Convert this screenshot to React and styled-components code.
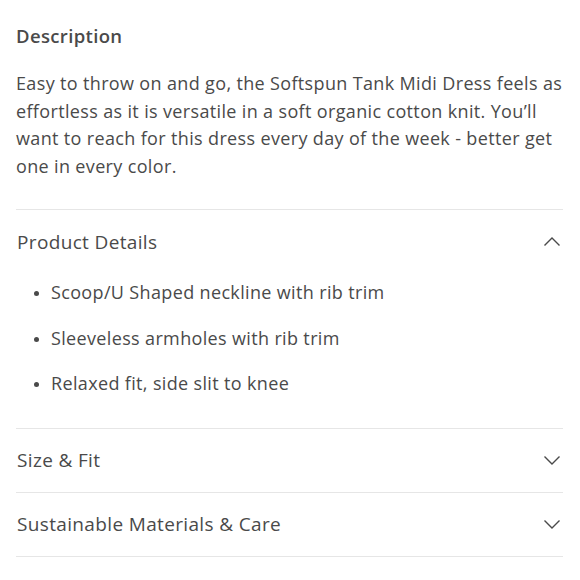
import React, { useState } from 'react';
import styled, { createGlobalStyle } from 'styled-components';

const GlobalStyle = createGlobalStyle`
  body {
    margin: 0;
    background: #fff;
    font-family: "Open Sans", Lato, sans-serif;
    color: #4a4a4a;
    letter-spacing: 0.35px;
  }
`;

const Page = styled.div`
  padding: 22px 17px 0 16px;
`;

const Heading = styled.h2`
  margin: 0;
  font-size: 18.5px;
  font-weight: 600;
  line-height: 28px;
`;

const Paragraph = styled.p`
  margin: 20px 0 29px;
  font-size: 18px;
  line-height: 27.5px;
`;

const Section = styled.div`
  border-top: 1px solid #e6e6e6;
  &:last-child {
    border-bottom: 1px solid #e6e6e6;
  }
`;

const Header = styled.button`
  display: flex;
  align-items: center;
  justify-content: space-between;
  width: 100%;
  height: 63px;
  padding: 0 1px;
  border: 0;
  background: none;
  font: inherit;
  font-size: 19px;
  letter-spacing: 0.35px;
  color: #4a4a4a;
  cursor: pointer;
`;

const Chevron = styled.svg`
  width: 20px;
  height: 12px;
  transform: ${({ open }) => (open ? 'rotate(180deg)' : 'none')};
`;

const List = styled.ul`
  margin: -3px 0 0;
  padding: 0 0 21px 35px;
  list-style: disc;
  font-size: 18px;
`;

const Item = styled.li`
  line-height: 45.5px;
  &::marker {
    font-size: 14px;
  }
`;

const sections = [
  {
    title: 'Product Details',
    items: [
      'Scoop/U Shaped neckline with rib trim',
      'Sleeveless armholes with rib trim',
      'Relaxed fit, side slit to knee',
    ],
  },
  { title: 'Size & Fit', items: [] },
  { title: 'Sustainable Materials & Care', items: [] },
];

const Accordion = ({ section, defaultOpen }) => {
  const [open, setOpen] = useState(defaultOpen);
  return (
    <Section>
      <Header onClick={() => setOpen(!open)}>
        <span>{section.title}</span>
        <Chevron open={open} viewBox="0 0 20 12">
          <path d="M2.5 2.5l7.5 7.5 7.5-7.5" fill="none" stroke="#4a4a4a" strokeWidth="1.4" />
        </Chevron>
      </Header>
      {open && (
        <List>
          {section.items.map((item, i) => (
            <Item key={i}>{item}</Item>
          ))}
        </List>
      )}
    </Section>
  );
};

export default function App() {
  return (
    <>
      <GlobalStyle />
      <Page>
        <Heading>Description</Heading>
        <Paragraph>
          Easy to throw on and go, the Softspun Tank Midi Dress feels as effortless as it is
          versatile in a soft organic cotton knit. You’ll want to reach for this dress every day of
          the week - better get one in every color.
        </Paragraph>
        {sections.map((s, i) => (
          <Accordion key={s.title} section={s} defaultOpen={i === 0} />
        ))}
      </Page>
    </>
  );
}
